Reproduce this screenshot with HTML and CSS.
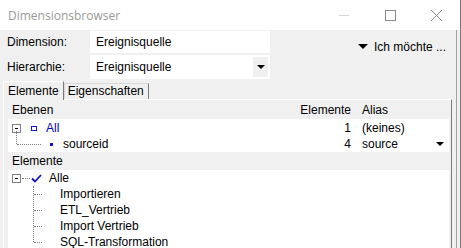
FILE: index.html
```html
<!DOCTYPE html>
<html lang="de">
<head>
    <meta charset="UTF-8">
    <title>Dimensionsbrowser</title>
    <link rel="stylesheet" href="styles.css">
</head>
<body>
    <div class="window">
        <div class="titlebar">
            <div class="title">Dimensionsbrowser</div>
            <div class="controls">
                <svg class="ctl" width="12" height="12" viewBox="0 0 12 12"><path d="M1 6.5h10" stroke="#d6d6d6" stroke-width="1"/></svg>
                <svg class="ctl" width="12" height="12" viewBox="0 0 12 12"><rect x="1.5" y="1.5" width="10" height="10" fill="none" stroke="#8a8a8a"/></svg>
                <svg class="ctl" width="12" height="12" viewBox="0 0 12 12"><path d="M1 1l11 11M12 1L1 12" stroke="#8a8a8a" stroke-width="1"/></svg>
            </div>
        </div>
        <div class="content">
            <div class="top">
                <div class="fields">
                    <div class="field">
                        <span class="label">Dimension:</span>
                        <div class="input">Ereignisquelle</div>
                    </div>
                    <div class="field">
                        <span class="label">Hierarchie:</span>
                        <div class="input combo">Ereignisquelle<span class="drop"><span class="tri"></span></span></div>
                    </div>
                </div>
                <div class="menu"><span class="tri"></span>Ich möchte ...</div>
            </div>
            <div class="tabs">
                <div class="tab active">Elemente</div>
                <div class="tab">Eigenschaften</div>
            </div>
            <div class="panel">
                <div class="head">
                    <span class="col-name">Ebenen</span>
                    <span class="col-count">Elemente</span>
                    <span class="col-alias">Alias</span>
                </div>
                <div class="levels">
                    <div class="lrow">
                        <span class="col-name">
                            <span class="minus"></span>
                            <span class="sq-outline"></span>
                            <span class="blue">All</span>
                        </span>
                        <span class="col-count">1</span>
                        <span class="col-alias">(keines)</span>
                    </div>
                    <div class="lrow">
                        <span class="col-name">
                            <span class="elbow"></span>
                            <span class="sq-fill"></span>
                            <span>sourceid</span>
                        </span>
                        <span class="col-count">4</span>
                        <span class="col-alias">source<span class="tri"></span></span>
                    </div>
                </div>
                <div class="head">
                    <span class="col-name">Elemente</span>
                </div>
                <div class="tree">
                    <div class="trow root">
                        <span class="minus"></span>
                        <span class="hdots"></span>
                        <svg class="check" width="11" height="9" viewBox="0 0 11 9"><path d="M1 4.5l3 3 6-6.5" fill="none" stroke="#1010c0" stroke-width="1.8"/></svg>
                        <span>Alle</span>
                    </div>
                    <div class="children">
                        <div class="trow child">Importieren</div>
                        <div class="trow child">ETL_Vertrieb</div>
                        <div class="trow child">Import Vertrieb</div>
                        <div class="trow child last">SQL-Transformation</div>
                    </div>
                </div>
            </div>
        </div>
    </div>
</body>
</html>
```

FILE: styles.css
```css
body {
    margin: 0;
    font-family: 'Liberation Sans', Arial, sans-serif;
    font-size: 12px;
    color: #000;
    overflow: hidden;
}
.window {
    width: 460px;
    height: 248px;
    border-right: 1px solid #7a7a7a;
    background-color: #f0f0f0;
    overflow: hidden;
}
.titlebar {
    height: 30px;
    background-color: #ffffff;
    display: flex;
    align-items: center;
    justify-content: space-between;
}
.title {
    padding-left: 8px;
    color: #999999;
    font-family: 'Open Sans', sans-serif;
    font-size: 12px;
}
.controls {
    display: flex;
    gap: 34px;
    padding-right: 18px;
}
.ctl {
    display: block;
}
.content {
    padding: 1px 4px 0 3px;
    border-right: 1px solid #a0a0a0;
    margin-right: 3px;
    height: 217px;
}
.top {
    display: flex;
    justify-content: space-between;
    height: 49px;
}
.fields {
    display: flex;
    flex-direction: column;
    gap: 2px;
}
.field {
    display: flex;
    align-items: center;
}
.label {
    width: 83px;
    padding-left: 4px;
}
.input {
    width: 174px;
    height: 22px;
    line-height: 22px;
    background: #ffffff;
    padding-left: 6px;
    position: relative;
}
.combo {
    height: 24px;
    line-height: 24px;
}
.drop {
    position: absolute;
    right: 2px;
    top: 2px;
    width: 15px;
    height: 20px;
    background: #f0f0f0;
    display: flex;
    align-items: center;
    justify-content: center;
}
.tri {
    display: inline-block;
    width: 0;
    height: 0;
    border-left: 4px solid transparent;
    border-right: 4px solid transparent;
    border-top: 4px solid #000;
}
.menu {
    padding-top: 9px;
    padding-right: 6px;
    display: flex;
    align-items: flex-start;
    gap: 6px;
}
.menu .tri {
    border-left-width: 5px;
    border-right-width: 5px;
    border-top-width: 5px;
    margin-top: 4px;
}
.tabs {
    display: flex;
    align-items: flex-end;
    height: 19px;
    position: relative;
    z-index: 1;
}
.tab {
    border: 1px solid #d9d9d9;
    border-right-color: #7a7a7a;
    border-bottom: none;
    padding: 0 4px 0 3px;
    height: 15px;
    line-height: 15px;
    background: #f0f0f0;
}
.tab.active {
    height: 18px;
    line-height: 18px;
    border-color: #ffffff;
    border-right-color: #7a7a7a;
    padding: 0 4px 0 4px;
    margin-bottom: -1px;
}
.panel {
    border: 1px solid #ffffff;
    border-right-color: #7a7a7a;
    border-bottom: none;
    height: 160px;
    padding: 1px 2px 0 4px;
}
.head {
    display: flex;
    height: 18px;
    line-height: 19px;
    padding-left: 4px;
}
.col-name {
    flex: 1;
    display: flex;
    align-items: center;
    gap: 0;
}
.col-count {
    width: 60px;
    text-align: right;
}
.col-alias {
    width: 98px;
    padding-left: 11px;
    display: flex;
    align-items: center;
    justify-content: space-between;
    box-sizing: border-box;
    padding-right: 5px;
}
.levels {
    background: #ffffff;
    height: 32px;
    padding-top: 1px;
}
.lrow {
    display: flex;
    height: 16px;
    line-height: 16px;
    padding-left: 4px;
}
.minus {
    width: 7px;
    height: 7px;
    border: 1px solid #808080;
    position: relative;
    margin-right: 10px;
    background: #fff;
}
.minus::after {
    content: '';
    position: absolute;
    left: 2px;
    top: 3px;
    width: 3px;
    height: 1px;
    background: #000;
}
.sq-outline {
    width: 4px;
    height: 3px;
    border: 1px solid #1010d0;
    margin-right: 9px;
}
.sq-fill {
    width: 3px;
    height: 3px;
    background: #1010d0;
    margin-right: 10px;
}
.blue {
    color: #0000c0;
}
.elbow {
    width: 30px;
    height: 16px;
    position: relative;
    margin-right: 8px;
}
.elbow::before {
    content: '';
    position: absolute;
    left: 4px;
    top: -5px;
    height: 13px;
    border-left: 1px dotted #808080;
}
.elbow::after {
    content: '';
    position: absolute;
    left: 5px;
    top: 8px;
    width: 24px;
    border-top: 1px dotted #808080;
}
.tree {
    background: #ffffff;
    height: 80px;
}
.trow {
    height: 16px;
    line-height: 16px;
}
.root {
    display: flex;
    align-items: center;
    padding-left: 4px;
}
.root .minus {
    margin-right: 1px;
}
.hdots {
    width: 8px;
    border-top: 1px dotted #808080;
}
.check {
    margin: 0 7px 0 1px;
}
.children {
    margin-left: 25px;
    border-left: 1px dotted #808080;
    height: 56px;
}
.child {
    padding-left: 26px;
    position: relative;
}
.child::before {
    content: '';
    position: absolute;
    left: 0;
    top: 8px;
    width: 8px;
    border-top: 1px dotted #808080;
}
```
